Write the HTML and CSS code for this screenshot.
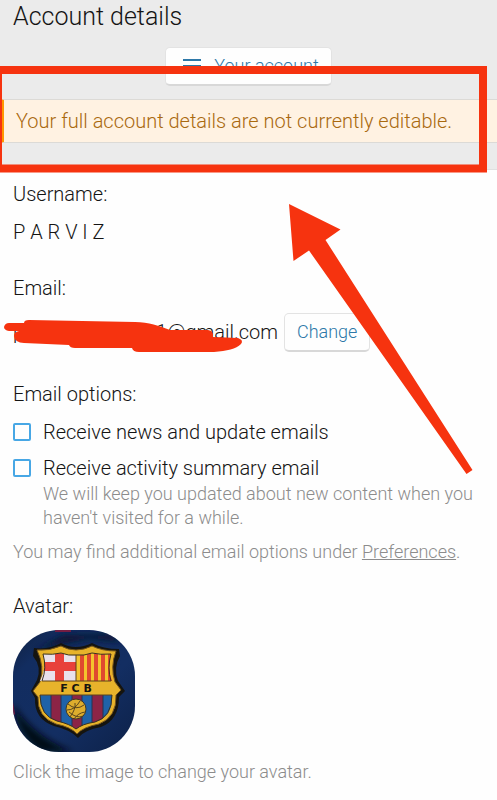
FILE: index.html
```html
<!DOCTYPE html>
<html lang="en">
<head>
<meta charset="utf-8">
<meta name="viewport" content="width=device-width, initial-scale=1">
<title>Account details</title>
<link rel="stylesheet" href="styles.css">
</head>
<body>
<header class="page-head">
  <h1 class="title">Account details</h1>
  <button class="button menu-button" type="button">
    <svg class="menu-icon" width="20" height="16" viewBox="0 0 20 16" aria-hidden="true"><path d="M1 2h18M1 8h18M1 14h18" stroke="#2d78a8" stroke-width="2"/></svg>
    Your account
  </button>
  <p class="notice">Your full account details are not currently editable.</p>
</header>
<main class="form">
  <dl class="field">
    <dt>Username:</dt>
    <dd>P A R V I Z</dd>
  </dl>
  <dl class="field">
    <dt>Email:</dt>
    <dd class="email-row"><span class="email"><span>p</span><span>1@gmail.com</span></span><button class="button" type="button">Change</button></dd>
  </dl>
  <section class="field">
    <h2 class="label">Email options:</h2>
    <div class="option">
      <input id="news" type="checkbox"><label for="news">Receive news and update emails</label>
    </div>
    <div class="option">
      <input id="activity" type="checkbox" aria-describedby="activity-hint"><label for="activity">Receive activity summary email</label>
    </div>
    <p class="hint hint-inset" id="activity-hint">We will keep you updated about new content when you haven't visited for a while.</p>
    <p class="hint more">You may find additional email options under <a href="#">Preferences</a>.</p>
  </section>
  <section class="field">
    <h2 class="label">Avatar:</h2>
    <button class="avatar" type="button" aria-label="Change avatar">
      <svg viewBox="0 0 122 122" aria-hidden="true">
        <defs>
          <linearGradient id="cloth" x1="0" y1="0" x2="1" y2="1">
            <stop offset="0" stop-color="#10203f"/><stop offset=".2" stop-color="#122d60"/><stop offset=".6" stop-color="#132e62"/><stop offset="1" stop-color="#0d2148"/>
          </linearGradient>
          <filter id="soft" x="-20%" y="-20%" width="140%" height="140%"><feGaussianBlur stdDeviation="3"/></filter>
          <clipPath id="inner"><path d="M30 24Q40 25 48 23Q56 26 63 25Q71 26 79 23Q87 25 98 24Q94 38 99 51V68Q99 87 82 92Q69 94 63 99Q57 94 44 91Q28 86 27 68V51Q34 38 30 24Z"/></clipPath>
        </defs>
        <rect width="122" height="122" fill="url(#cloth)"/>
        <path d="M0 74Q18 105 60 122H28Q4 106 0 74Z" fill="#040919" filter="url(#soft)"/>
        <path d="M20 22L50 5L98 4L110 12L75 9L45 15Z" fill="#081530" filter="url(#soft)"/>
        <path d="M42 0H58V2H42ZM0 72L2 84L0 86Z" fill="#741d42"/>
        <path d="M21 18Q36 20 48 13Q55 17 63 17Q71 17 79 13Q90 19 106 19L107 26Q100 38 105 51L112 61L106 67Q106 90 88 97Q71 100 65 108Q58 100 41 96Q21 89 22 68L18 61L24 50Q29 37 20 26Z" fill="#15140f"/>
        <path d="M24 20Q37 21 48 16Q55 20 63 20Q71 20 79 16Q89 21 103 21Q97 37 102 52L108 60L103 65Q104 87 86 94Q70 97 64 104Q58 97 43 94Q24 87 25 67L20 61L27 52Q32 37 24 20Z" fill="#e7b32b" stroke="#74551d" stroke-width="1"/>
        <g clip-path="url(#inner)">
          <path d="M24 20H63V51H24Z" fill="#e9e1ec"/>
          <path d="M42 20H51V51H42ZM24 32H63V41H24Z" fill="#e8413b"/>
          <path d="M63 20H99V51H63Z" fill="#f4c32d"/>
          <path d="M67 20h4v31h-4zM74 20h4v31h-4zM81 20h4v31h-4zM88 20h4v31h-4zM95 20h4v31h-4z" fill="#e0492f"/>
          <path d="M24 65H102V105H24Z" fill="#1f62a8"/>
          <path d="M38 65H48V105H38ZM59 65H69V105H59ZM79 65H90V105H79Z" fill="#8c2446"/>
          <path d="M38 65V98M48 65V98M59 65V101M69 65V101M79 65V98M90 65V94" stroke="#233455" stroke-width="1"/>
        </g>
        <path d="M63 25V51M29 51H98M27 65H99" stroke="#5c421d" stroke-width="1"/>
        <path d="M30 24Q40 25 48 23Q56 26 63 25Q71 26 79 23Q87 25 98 24Q94 38 98 51M29 51Q34 38 30 24M27 65Q27 86 44 91Q57 94 63 99Q69 94 82 92Q99 87 99 65" fill="none" stroke="#3b321e" stroke-width="1"/>
        <text x="63" y="62" class="crest-text">F C B</text>
        <circle cx="63" cy="79" r="10" fill="#ddad2d" stroke="#433923" stroke-width="1"/>
        <path d="M55 74Q63 81 71 75M54 80Q62 80 67 71M57 87Q63 79 62 73M61 89Q65 83 72 82M56 82Q64 89 70 86" fill="none" stroke="#58451f" stroke-width="1"/>
      </svg>
    </button>
    <p class="hint avatar-hint">Click the image to change your avatar.</p>
  </section>
</main>
<svg class="markup" width="497" height="540" viewBox="0 0 497 540" aria-hidden="true">
  <g fill="#f6330f">
    <path fill-rule="evenodd" d="M0 66H487V172.500H0ZM2 74V164.500H479V74Z"/>
    <path d="M289 204L340.500 229.500L325.500 240L472.500 470L466.500 474L309 250.500L293.500 261Z"/>
    <path d="M9 323H24Q24 320 29 320L135 322C149 322 159 326 170 330H208Q214 331 213 337L238 338Q244 340 241 344C236 349 227 351 214 352H139Q133 352 132 348H75Q70 348 69 345L24 343Q15 343 14 336Q14 332 19 331H9Q4 330 4 327Q5 323 9 323Z"/>
  </g>
</svg>
</body>
</html>
```
FILE: styles.css
```css
* {
  box-sizing: border-box;
}

body {
  position: relative;
  min-height: 100vh;
  margin: 0;
  overflow-x: hidden;
  background: #fefefe;
  color: #141414;
  font: 300 20px/28px Roboto, sans-serif;
}

h1, h2, p, dl, dd {
  margin: 0;
  font-weight: 300;
}

.page-head {
  display: flex;
  flex-direction: column;
  align-items: center;
  padding-bottom: 26px;
  border-bottom: 1px solid #e0e0e0;
  background: #ebebeb;
}

.title {
  align-self: stretch;
  padding: 0 13px;
  font-size: 25px;
  line-height: 34px;
}

.button {
  display: flex;
  align-items: center;
  height: 39px;
  padding: 0 12px;
  border: 1px solid #e3e3e3;
  border-bottom: 2px solid #d8d8d8;
  border-radius: 5px;
  background: #fefefe;
  color: #2d78a8;
  font: 300 18px/24px Roboto, sans-serif;
}

.menu-button {
  gap: 12px;
  margin-top: 13px;
  padding: 0 12px 0 16px;
}

.notice {
  align-self: stretch;
  margin-top: 13px;
  padding: 7px 12px;
  border: solid #dcdad6;
  border-width: 1px 0;
  border-left: 4px solid #ff9800;
  background: #fff2e2;
  color: #a9690f;
}

.form {
  padding: 10px 12px 0 13px;
}

.field + .field {
  margin-top: 28px;
}

.field dd {
  margin-top: 10px;
}

.field .email-row {
  display: flex;
  align-items: center;
  gap: 6px;
  height: 40px;
}

.email {
  display: flex;
  justify-content: space-between;
  width: 265px;
}

.label {
  margin-bottom: 10px;
  font-size: 20px;
}

.option {
  display: flex;
  align-items: center;
  gap: 12px;
}

.option + .option {
  margin-top: 8px;
}

.option input {
  appearance: none;
  width: 18px;
  height: 18px;
  margin: 0;
  border: 2px solid #47a7e5;
  border-radius: 2px;
}

.hint {
  color: #8c8c8c;
  font-size: 18px;
  line-height: 24px;
}

.hint a {
  color: inherit;
}

.hint-inset {
  padding-left: 30px;
}

.more {
  margin-top: 10px;
}

.avatar {
  display: block;
  width: 122px;
  height: 122px;
  padding: 0;
  overflow: hidden;
  border: 0;
  border-radius: 46px;
}

.avatar svg {
  display: block;
}

.crest-text {
  fill: #18150f;
  font: 700 11px "DejaVu Sans", sans-serif;
  text-anchor: middle;
}

.avatar-hint {
  margin-top: 8px;
}

.markup {
  position: absolute;
  top: 0;
  left: 0;
  pointer-events: none;
}
```
